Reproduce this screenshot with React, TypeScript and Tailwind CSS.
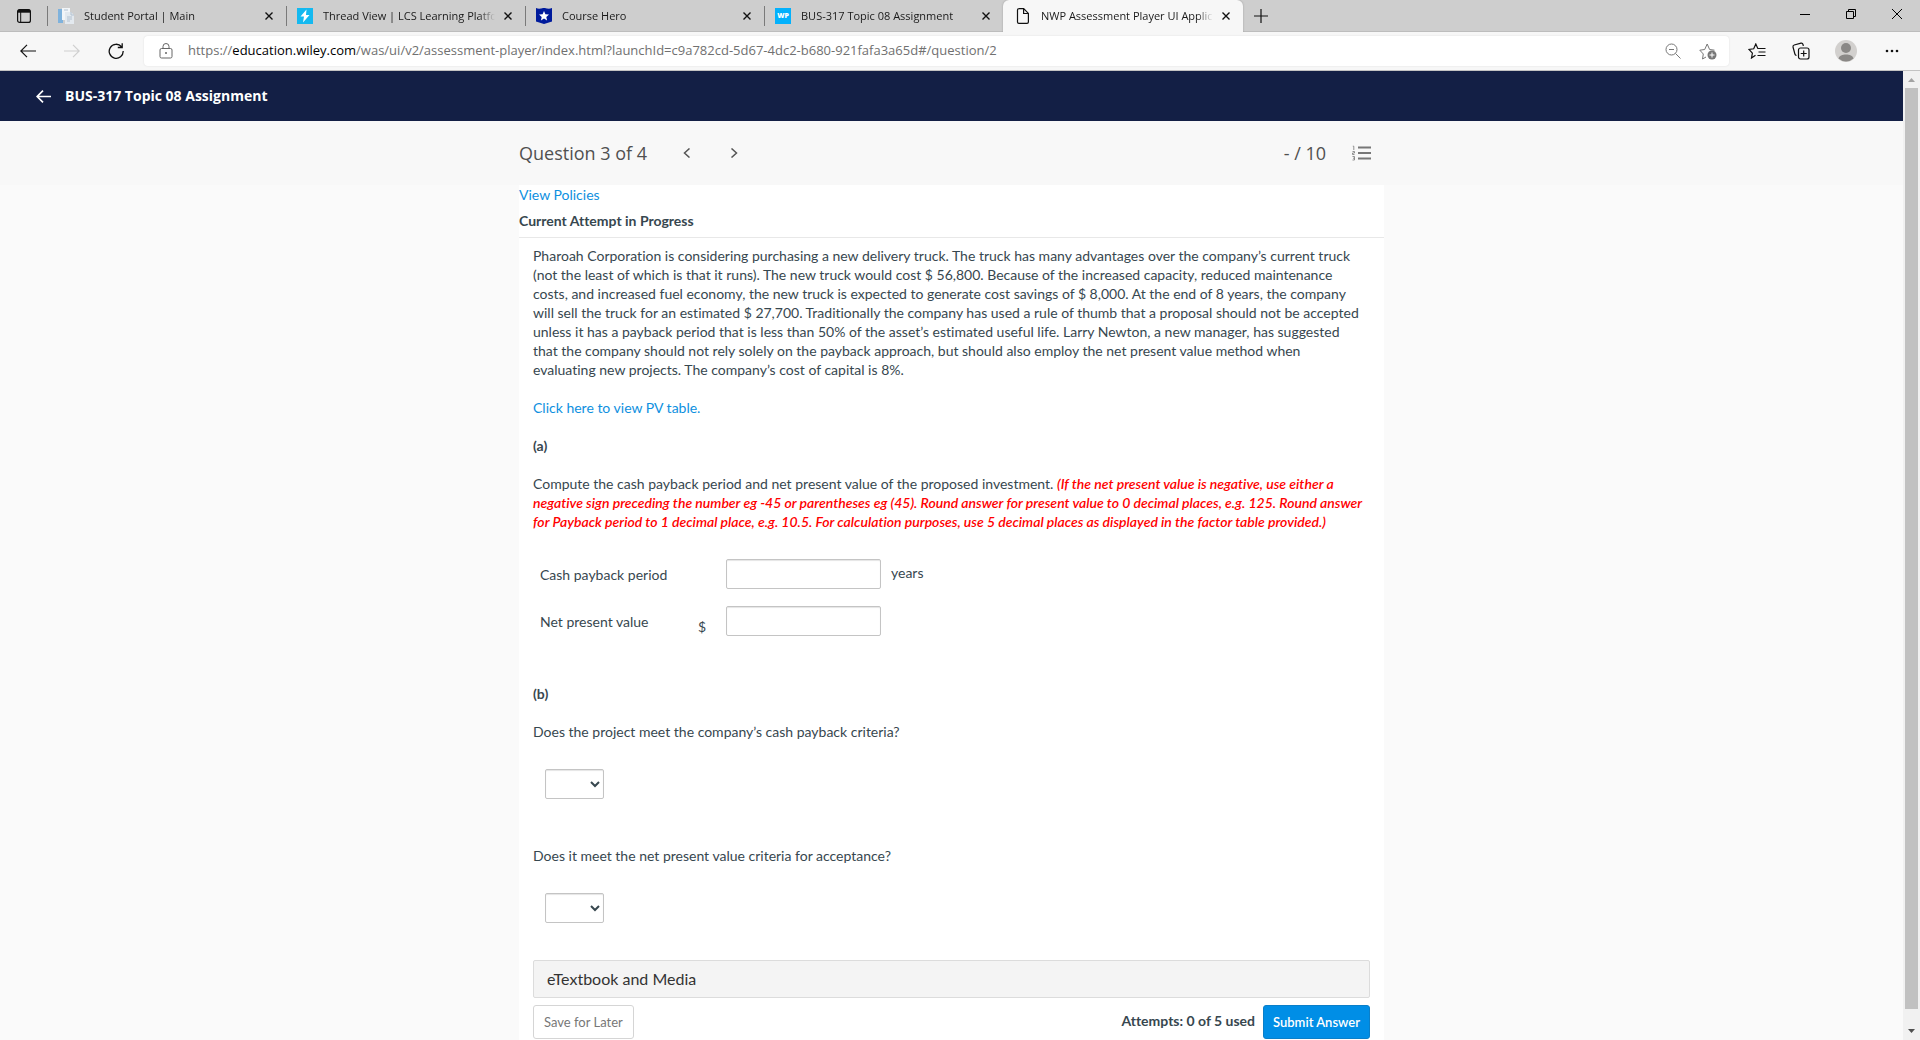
import React from "react";

interface Tab {
  title: string;
  icon: React.ReactNode;
  active?: boolean;
}

const tabs: Tab[] = [
  {
    title: "Student Portal | Main",
    icon: (
      <svg width="16" height="16" viewBox="0 0 16 16">
        <rect width="5" height="14" y="1" fill="#7fb2dc" />
        <path d="M4 0h8v12H4z" fill="#f2f5f8" />
        <path d="M7 4h6l3 3v9H7z" fill="#e3e9ef" />
        <path d="M13 4v3h3M9 9h5M9 11h5M9 13h3M6 2h4" stroke="#b3c2d1" fill="none" />
      </svg>
    ),
  },
  {
    title: "Thread View | LCS Learning Platform",
    icon: (
      <svg width="16" height="16" viewBox="0 0 16 16">
        <rect width="16" height="16" fill="#14b9f0" />
        <path d="M9.5 1.5 3.5 8.5H7L6 14.5 12.5 7H9z" fill="#fff" />
      </svg>
    ),
  },
  {
    title: "Course Hero",
    icon: (
      <svg width="16" height="16" viewBox="0 0 16 16">
        <path d="M0 0c3 1.5 5 .5 8-.2 3 .7 5 1.700 8 .2v13.500L8 16l-8-2.500z" fill="#001b9c" />
        <path d="m8 3 1.400 3.300 3.600.3-2.700 2.300.8 3.500L8 10.500l-3.100 1.900.8-3.500L3 6.600l3.600-.3z" fill="#fff" />
      </svg>
    ),
  },
  {
    title: "BUS-317 Topic 08 Assignment",
    icon: (
      <span className="flex size-4 items-center justify-center bg-[#03b1fc] text-[7px] font-extrabold text-white">
        WP
      </span>
    ),
  },
  {
    title: "NWP Assessment Player UI Application",
    active: true,
    icon: (
      <svg width="16" height="16" viewBox="0 0 16 16" fill="none" stroke="#111" strokeWidth="1.200">
        <path d="M3.500.6h5.200L13.400 5.400v8.600q0 1.400-1.400 1.400H3.900q-1.400 0-1.400-1.400V2q0-1.400 1.400-1.400zM8.600.8v4.700h4.700" />
      </svg>
    ),
  },
];

const TabItem: React.FC<{ tab: Tab }> = ({ tab }) => (
  <div
    className={
      tab.active
        ? "flex h-full w-60 items-center rounded-t-md bg-[#f7f7f7] pr-1 pl-3 shadow-[0_0_2px_#999]"
        : "flex h-full w-[239px] items-center pr-1"
    }
  >
    {!tab.active && <span className="mr-[10px] h-5 w-px bg-[#7a7a7a]" />}
    {tab.icon}
    <span className="ml-[10px] flex-1 overflow-hidden text-[11px] whitespace-nowrap text-[#1a1a1a] [mask-image:linear-gradient(to_right,#000_calc(100%-16px),transparent)]">
      {tab.title}
    </span>
    <button aria-label="Close tab" className="flex w-[26px] justify-center">
      <svg width="8" height="8" viewBox="0 0 8 8" stroke="#111" strokeWidth="1.400">
        <path d="M.5.5l7 7M7.500.5l-7 7" />
      </svg>
    </button>
  </div>
);

const TabStrip = () => (
  <div className="flex h-8 shrink-0 bg-[#cecece] shadow-[inset_0_-1px_#bdbdbd]">
    <button aria-label="Tab actions" className="flex w-[47px] items-center justify-center">
      <svg width="14" height="14" viewBox="0 0 14 14" fill="none" stroke="#111">
        <rect x=".6" y=".6" width="12.800" height="12.800" rx="2" strokeWidth="1.200" />
        <path d="M1 2.200h12" strokeWidth="3" />
        <path d="M3.700 3v10" />
      </svg>
    </button>
    {tabs.map((tab) => (
      <TabItem key={tab.title} tab={tab} />
    ))}
    <button aria-label="New tab" className="flex w-9 items-center justify-center">
      <svg width="14" height="14" viewBox="0 0 14 14" stroke="#111" strokeWidth="1.200">
        <path d="M7 0v14M0 7h14" />
      </svg>
    </button>
    <div className="ml-auto flex h-7">
      <button aria-label="Minimize" className="flex w-[46px] items-center justify-center">
        <svg width="10" height="10" stroke="#000">
          <path d="M0 5.500h10" />
        </svg>
      </button>
      <button aria-label="Restore" className="flex w-[46px] items-center justify-center">
        <svg width="10" height="10" stroke="#000" fill="none">
          <path d="M.5 2.500h7v7h-7zM2.500 2.500v-2h7v7h-2" />
        </svg>
      </button>
      <button aria-label="Close" className="flex w-[46px] items-center justify-center">
        <svg width="10" height="10" stroke="#000">
          <path d="M0 0l10 10M10 0L0 10" />
        </svg>
      </button>
    </div>
  </div>
);

const AddressBar = () => (
  <div className="flex h-[39px] shrink-0 items-center border-b border-[#c3c3c3] bg-[#f7f7f7] pl-[6px]">
    <button aria-label="Back" className="flex w-11 justify-center">
      <svg width="16" height="14" viewBox="0 0 16 14" fill="none" stroke="#111" strokeWidth="1.200">
        <path d="M16 7H1M7 .8L.8 7 7 13.200" />
      </svg>
    </button>
    <button aria-label="Forward" className="flex w-11 justify-center">
      <svg width="16" height="14" viewBox="0 0 16 14" fill="none" stroke="#cfcfcf" strokeWidth="1.200">
        <path d="M0 7h15M9 .8L15.200 7 9 13.200" />
      </svg>
    </button>
    <button aria-label="Refresh" className="flex w-11 justify-center">
      <svg width="16" height="16" viewBox="0 0 16 16" fill="none" stroke="#111" strokeWidth="1.300">
        <path d="M13.500 3.700A7 7 0 1 0 15.200 8M14.200.3v4.200H9.800" />
      </svg>
    </button>
    <div className="ml-[6px] flex h-[30px] flex-1 items-center rounded bg-white pr-[5px] shadow-[0_0_2px_#ddd]">
      <button aria-label="Site information" className="flex w-11 justify-center">
        <svg width="14" height="16" viewBox="0 0 14 16" fill="none" stroke="#666">
          <rect x="1" y="5.500" width="12" height="9.500" rx="1.500" />
          <path d="M4 5.500V3.500a3 3 0 0 1 6 0v2" />
          <circle cx="7" cy="10" r="1" fill="#666" stroke="none" />
        </svg>
      </button>
      <div role="textbox" aria-label="Address" className="flex-1 text-[13px] whitespace-nowrap text-[#707070]">
        https://<span className="text-black">education.wiley.com</span>
        /was/ui/v2/assessment-player/index.html?launchId=c9a782cd-5d67-4dc2-b680-921fafa3a65d#/question/2
      </div>
      <button aria-label="Zoom" className="flex w-[37px] justify-center">
        <svg width="16" height="16" viewBox="0 0 16 16" fill="none" stroke="#777">
          <circle cx="6.500" cy="6.500" r="5.500" />
          <path d="M10.500 10.500l5 5M4 6.500h5" />
        </svg>
      </button>
      <button aria-label="Add to favorites" className="flex w-[33px] justify-center">
        <svg width="18" height="18" viewBox="0 0 18 18" fill="none" stroke="#777">
          <path d="M7 15l-3.500 2 .8-5L.8 8.200l4.900-.7L8.200 2l2.400 5.500 4.900.7" />
          <circle cx="13" cy="13" r="4.500" fill="#777" stroke="none" />
          <path d="M13 10.500v5M10.500 13h5" stroke="#fff" />
        </svg>
      </button>
    </div>
    <button aria-label="Favorites" className="ml-[6px] flex w-11 justify-center">
      <svg width="18" height="16" viewBox="0 0 18 16" fill="none" stroke="#111" strokeWidth="1.200">
        <path d="M7.500 12.300l-4 2.700.9-4.900L1 6.500l4.700-.7L7.800 1l2 4.500h7.700M10.500 9h7M9.500 12.500h8" />
      </svg>
    </button>
    <button aria-label="Collections" className="flex w-11 justify-center">
      <svg width="18" height="18" viewBox="0 0 18 18" fill="none" stroke="#111" strokeWidth="1.200">
        <path d="M4.500 13.500q-1.300-.2-1.600-1.500L1 5q-.3-1.600 1.200-2L9 1.200q1.600-.3 2 1.300l.3 1.500" />
        <rect x="6.500" y="6" width="10.500" height="11" rx="2" />
        <path d="M11.700 8.500v6M8.700 11.500h6" />
      </svg>
    </button>
    <button aria-label="Profile" className="flex w-[46px] justify-center">
      <svg width="22" height="22" viewBox="0 0 22 22">
        <circle cx="11" cy="11" r="11" fill="#d2d0ce" />
        <circle cx="11" cy="8" r="5" fill="#8a8886" />
        <path d="M3.500 18.500c1-5.500 14-5.500 15 0a11 11 0 0 1-15 0z" fill="#8a8886" />
      </svg>
    </button>
    <button aria-label="Settings and more" className="mr-[5px] flex w-[46px] justify-center">
      <svg width="14" height="4" viewBox="0 0 14 4" fill="#111">
        <circle cx="2" cy="2" r="1.300" />
        <circle cx="7" cy="2" r="1.300" />
        <circle cx="12" cy="2" r="1.300" />
      </svg>
    </button>
  </div>
);

const ScrollBar = () => (
  <div className="flex w-[17px] shrink-0 flex-col items-center bg-[#f1f1f1]">
    <svg width="17" height="17" fill="#a3a3a3">
      <path d="M5 11l3.500-4L12 11z" />
    </svg>
    <div className="w-[13px] flex-1 bg-[#c1c1c1]" />
    <svg width="17" height="31" fill="#505050">
      <path d="M5 20h7l-3.500 4z" />
    </svg>
  </div>
);

const QuestionNav = () => (
  <div className="bg-[#f8f8f8]">
    <div className="mx-auto flex h-16 max-w-[865px] items-center text-lg text-[#505050]">
      <h2 className="w-36">Question 3 of 4</h2>
      <button aria-label="Previous question" className="flex w-[47px] justify-center">
        <svg width="8" height="10" viewBox="0 0 8 10" fill="none" stroke="#555" strokeWidth="1.500">
          <path d="M6.500.5L1.500 5l5 4.500" />
        </svg>
      </button>
      <button aria-label="Next question" className="flex w-[47px] justify-center">
        <svg width="8" height="10" viewBox="0 0 8 10" fill="none" stroke="#555" strokeWidth="1.500">
          <path d="M1.500.5l5 4.500-5 4.500" />
        </svg>
      </button>
      <span className="ml-auto">- / 10</span>
      <button aria-label="Question list" className="mr-[13px] ml-[26px]">
        <svg width="19" height="16" viewBox="0 0 19 16" fill="none" stroke="#777">
          <path d="M6 2.500h13M6 8h13M6 13.500h13" strokeWidth="1.800" />
          <path d="M.8 1.200h1V5M.5 6.500h2v1.500h-2v1.500h2M.5 11.500h2v3.500h-2M1 13.200h1.500" strokeWidth=".8" />
        </svg>
      </button>
    </div>
  </div>
);

interface ChoiceProps {
  id: string;
  question: string;
}

const Choice: React.FC<ChoiceProps> = ({ id, question }) => (
  <div className="mb-[47px]">
    <label htmlFor={id} className="block">
      {question}
    </label>
    <select
      id={id}
      className="mt-7 ml-3 block h-[30px] w-[59px] rounded-[2px] border border-[#c4c4c4] bg-white shadow-[inset_0_1px_1px_#e5e5e5]"
    >
      <option></option>
      <option>Yes</option>
      <option>No</option>
    </select>
  </div>
);

const Question = () => (
  <div className="mx-auto w-full max-w-[865px] flex-1 bg-white font-['Lato',sans-serif] text-sm leading-[19px] text-[#37474f] [font-variant-ligatures:none]">
    <div className="border-b border-[#e8e8e8] pb-[7px]">
      <a href="#policies" className="block text-[#0e90e0]">
        View Policies
      </a>
      <h3 className="mt-[7px] font-bold">Current Attempt in Progress</h3>
    </div>

    <div className="px-[14px] pt-2">
      <p className="max-w-[832px]">
        Pharoah Corporation is considering purchasing a new delivery truck. The truck has many advantages over the
        company’s current truck (not the least of which is that it runs). The new truck would cost $ 56,800. Because of
        the increased capacity, reduced maintenance costs, and increased fuel economy, the new truck is expected to
        generate cost savings of $ 8,000. At the end of 8 years, the company will sell the truck for an estimated $
        27,700. Traditionally the company has used a rule of thumb that a proposal should not be accepted unless it has a
        payback period that is less than 50% of the asset’s estimated useful life. Larry Newton, a new manager, has
        suggested that the company should not rely solely on the payback approach, but should also employ the net present
        value method when evaluating new projects. The company’s cost of capital is 8%.
      </p>
      <a href="#pv-table" className="mt-[19px] block text-[#0e90e0]">
        Click here to view PV table.
      </a>

      <h4 className="mt-[19px] font-bold">(a)</h4>
      <p className="mt-[19px]">
        Compute the cash payback period and net present value of the proposed investment.{" "}
        <em className="font-semibold text-[#ff0000]">
          (If the net present value is negative, use either a negative sign preceding the number eg -45 or parentheses eg
          (45). Round answer for present value to 0 decimal places, e.g. 125. Round answer for Payback period to 1
          decimal place, e.g. 10.5. For calculation purposes, use 5 decimal places as displayed in the factor table
          provided.)
        </em>
      </p>

      <div className="mt-7 ml-[7px] grid grid-cols-[158px_28px_155px_auto] items-center gap-y-[17px]">
        <label htmlFor="payback">Cash payback period</label>
        <span />
        <input id="payback" className="h-[30px] rounded-[2px] border border-[#c4c4c4] shadow-[inset_0_1px_1px_#e5e5e5]" />
        <span className="pb-1 pl-[10px]">years</span>
        <label htmlFor="npv">Net present value</label>
        <span className="self-end">$</span>
        <input id="npv" className="h-[30px] rounded-[2px] border border-[#c4c4c4] shadow-[inset_0_1px_1px_#e5e5e5]" />
      </div>

      <h4 className="mt-12 mb-[19px] font-bold">(b)</h4>
      <Choice id="criteria-payback" question="Does the project meet the company’s cash payback criteria?" />
      <Choice id="criteria-npv" question="Does it meet the net present value criteria for acceptance?" />

      <button className="-mt-[10px] block h-[38px] w-full rounded-[2px] border border-[#dcdcdc] bg-[#f4f4f4] px-[13px] text-left text-base text-[#333]">
        eTextbook and Media
      </button>
      <div className="mt-[7px] flex items-center">
        <button className="h-[34px] rounded-[3px] border border-[#d5d5d5] px-[10px] text-[13px] text-[#777]">
          Save for Later
        </button>
        <span className="mr-2 ml-auto pb-1 font-bold">Attempts: 0 of 5 used</span>
        <button className="h-[34px] rounded-[3px] border border-[#0a7fc9] bg-[#008ee6] px-[9px] text-[13px] font-semibold text-white">
          Submit Answer
        </button>
      </div>
    </div>
  </div>
);

export default function App() {
  return (
    <div className="flex h-screen flex-col overflow-hidden bg-[#fafafa] font-['Open_Sans',sans-serif]">
      <TabStrip />
      <AddressBar />
      <div className="flex min-h-0 flex-1">
        <main className="flex min-w-0 flex-1 flex-col">
          <header className="flex h-[50px] shrink-0 items-center bg-[#131f45] pl-9 text-white">
            <button aria-label="Back to course" className="mr-[14px]">
              <svg width="15" height="13" viewBox="0 0 15 13" fill="none" stroke="#fff" strokeWidth="1.700">
                <path d="M15 6.500H1.500M7 .7L1.200 6.500 7 12.300" />
              </svg>
            </button>
            <h1 className="text-sm font-bold">BUS-317 Topic 08 Assignment</h1>
          </header>
          <QuestionNav />
          <Question />
        </main>
        <ScrollBar />
      </div>
    </div>
  );
}
